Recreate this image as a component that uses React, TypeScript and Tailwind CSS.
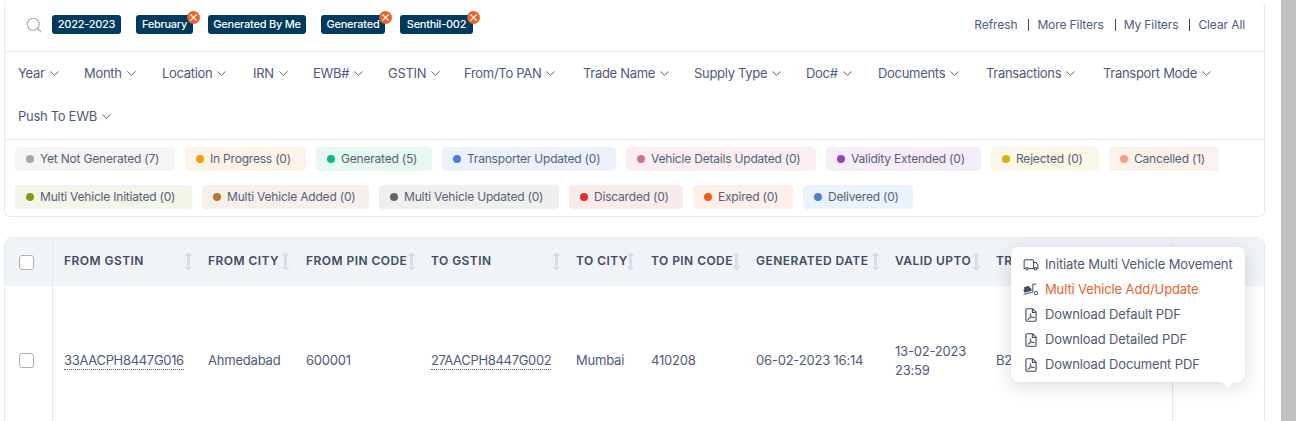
import React from "react";
import { ChevronDown, Search, X } from "lucide-react";

const pills = [
  { t: "2022-2023", w: 69, gap: 15 },
  { t: "February", w: 57, gap: 15, x: true },
  { t: "Generated By Me", w: 98, gap: 15 },
  { t: "Generated", w: 64, gap: 15, x: true },
  { t: "Senthil-002", w: 73, gap: 0, x: true },
];

const links = ["Refresh", "More Filters", "My Filters", "Clear All"];

const filters1 = [
  { t: "Year", w: 66 },
  { t: "Month", w: 78 },
  { t: "Location", w: 91 },
  { t: "IRN", w: 60 },
  { t: "EWB#", w: 75 },
  { t: "GSTIN", w: 76 },
  { t: "From/To PAN", w: 119 },
  { t: "Trade Name", w: 111 },
  { t: "Supply Type", w: 112 },
  { t: "Doc#", w: 72 },
  { t: "Documents", w: 108 },
  { t: "Transactions", w: 117 },
  { t: "Transport Mode", w: 120 },
];

const row1 = [
  { t: "Yet Not Generated (7)", w: 160, bg: "bg-[#f5f5f5]", dot: "bg-[#a8a8a8]" },
  { t: "In Progress (0)", w: 121, bg: "bg-[#fdf4e7]", dot: "bg-[#f39c12]" },
  { t: "Generated (5)", w: 116, bg: "bg-[#e7f7f2]", dot: "bg-[#10b98a]" },
  { t: "Transporter Updated (0)", w: 174, bg: "bg-[#ecf2fc]", dot: "bg-[#4a7fdc]" },
  { t: "Vehicle Details Updated (0)", w: 190, bg: "bg-[#faeef2]", dot: "bg-[#d0708f]" },
  { t: "Validity Extended (0)", w: 155, bg: "bg-[#f6edf8]", dot: "bg-[#a040b8]" },
  { t: "Rejected (0)", w: 108, bg: "bg-[#faf7e6]", dot: "bg-[#d4b016]" },
  { t: "Cancelled (1)", w: 110, bg: "bg-[#fdf1ec]", dot: "bg-[#f2a183]" },
];
const row2 = [
  { t: "Multi Vehicle Initiated (0)", w: 177, bg: "bg-[#f3f5e8]", dot: "bg-[#869a18]" },
  { t: "Multi Vehicle Added (0)", w: 167, bg: "bg-[#f7f0ea]", dot: "bg-[#b07830]" },
  { t: "Multi Vehicle Updated (0)", w: 180, bg: "bg-[#efefef]", dot: "bg-[#636363]" },
  { t: "Discarded (0)", w: 114, bg: "bg-[#fbeaea]", dot: "bg-[#d83030]" },
  { t: "Expired (0)", w: 100, bg: "bg-[#feefe9]", dot: "bg-[#f05a22]" },
  { t: "Delivered (0)", w: 110, bg: "bg-[#ecf2fc]", dot: "bg-[#4a7fdc]" },
];

const cols = [
  { h: "FROM GSTIN", w: 144, sort: 120, v: "33AACPH8447G016", dotted: true },
  { h: "FROM CITY", w: 98, sort: 73, v: "Ahmedabad" },
  { h: "FROM PIN CODE", w: 125, sort: 101, v: "600001" },
  { h: "TO GSTIN", w: 145, sort: 121, v: "27AACPH8447G002", dotted: true },
  { h: "TO CITY", w: 75, sort: 50, v: "Mumbai" },
  { h: "TO PIN CODE", w: 105, sort: 81, v: "410208" },
  { h: "GENERATED DATE", w: 139, sort: 115, v: "06-02-2023 16:14" },
  { h: "VALID UPTO", w: 101, sort: 77, v: "13-02-2023\n23:59" },
  { h: "TR", w: 176, sort: 0, v: "B2" },
];

function SortIcon() {
  return (
    <svg width="9" height="19" viewBox="0 0 9 19" fill="none" stroke="#cdd2d9" strokeWidth="1" className="shrink-0">
      <path d="M1 4.5 4.5 1 8 4.5M1 14.5 4.5 18 8 14.5M3.8 2v15M5.2 2v15" />
    </svg>
  );
}

function Pill({ t, w, gap, x }: { t: string; w: number; gap: number; x?: boolean }) {
  return (
    <div
      className="relative flex h-[19px] items-center justify-center rounded-[3px] bg-[#003a5d] text-[11px] font-medium tracking-[-0.25px] text-white"
      style={{ width: w, marginRight: gap }}
    >
      {t}
      {x && (
        <span className="absolute -right-[7px] -top-[4px] flex h-[13px] w-[13px] items-center justify-center rounded-full bg-[#e8622c]">
          <X size={11} color="#fff" strokeWidth={2.4} />
        </span>
      )}
    </div>
  );
}

function Chip({ t, w, bg, dot }: { t: string; w: number; bg: string; dot: string }) {
  return (
    <div className={`flex h-6 items-center gap-[6px] rounded-[4px] pl-[11px] text-[12px] tracking-[-0.2px] text-[#55607a] ${bg}`} style={{ width: w }}>
      <span className={`h-2 w-2 rounded-full ${dot}`} />
      <span className="whitespace-nowrap">{t}</span>
    </div>
  );
}

function FilterItem({ t, w }: { t: string; w?: number }) {
  return (
    <div className="flex items-center gap-[2px] whitespace-nowrap text-[13px] tracking-[-0.3px] text-[#4d5a78]" style={w ? { width: w } : undefined}>
      {t}
      <ChevronDown size={15} strokeWidth={1.5} color="#4d5768" />
    </div>
  );
}

function TruckIcon() {
  return (
    <svg width="16" height="12" viewBox="0 0 18 14" fill="none" stroke="#3f4a5e" strokeWidth="1.2">
      <path d="M2.5 11H1V2.2A1.2 1.2 0 0 1 2.2 1h8.6A1.2 1.2 0 0 1 12 2.2V11H6.2M12 4h3l2 3v4h-1M12 11h.5" />
      <circle cx="4.3" cy="11.3" r="1.5" />
      <circle cx="14.3" cy="11.3" r="1.5" />
    </svg>
  );
}

function LiftIcon() {
  return (
    <svg width="16" height="13" viewBox="0 0 18 14" fill="none" stroke="#3f4a5e" strokeWidth="1.1">
      <path d="M1 7.5 8.5 5.5 9.3 8 1.8 10Z" fill="#3f4a5e" />
      <path d="M1.5 4.8 6.5 3.5 7.2 5.2 2.2 6.5Z" fill="#3f4a5e" />
      <path d="M.8 12.5 11 10V1h4" />
      <circle cx="14.5" cy="11" r="2" />
    </svg>
  );
}

function PdfIcon() {
  return (
    <svg width="12" height="14" viewBox="0 0 13 15" fill="none" stroke="#3f4a5e" strokeWidth="1.2">
      <path d="M2.2 .8H8.3L12 4.5V12.8A1.4 1.4 0 0 1 10.6 14.2H2.4A1.4 1.4 0 0 1 1 12.8V2A1.2 1.2 0 0 1 2.2 .8ZM8 1V4.8H12" />
      <path d="M3 12.2C5 11.5 6.5 8.5 6.2 6.5 6 5.5 5.3 6 5.6 7.2 6 9 8 10.6 10 10.6 10.8 10.5 10.2 9.8 9 9.9 7 10.1 4.5 11 3 12.2Z" strokeWidth=".9" />
    </svg>
  );
}

function Menu() {
  const items = [
    { t: "Initiate Multi Vehicle Movement", icon: <TruckIcon /> },
    { t: "Multi Vehicle Add/Update", icon: <LiftIcon />, active: true },
    { t: "Download Default PDF", icon: <PdfIcon /> },
    { t: "Download Detailed PDF", icon: <PdfIcon /> },
    { t: "Download Document PDF", icon: <PdfIcon /> },
  ];
  return (
    <div className="absolute left-[1006px] top-[9px] flex h-[135px] w-[234px] flex-col justify-center rounded-[8px] bg-white pl-[12px] shadow-[0_4px_18px_rgba(40,50,70,0.18)]">
      {items.map((i) => (
        <div key={i.t} className={`flex h-[25px] items-center whitespace-nowrap text-[13px] tracking-[-0.13px] ${i.active ? "text-[#e8622c]" : "text-[#4f5a70]"}`}>
          <span className="mr-[6px] flex w-[16px] justify-center">{i.icon}</span>
          <span>{i.t}</span>
        </div>
      ))}
      <span className="absolute left-[213px] top-[131px] h-[8px] w-[8px] rotate-45 bg-white" />
    </div>
  );
}

function CheckCell() {
  return (
    <div className="flex w-[48px] items-center border-r border-[#e4e8ee] pl-[14px]">
      <span className="h-[15px] w-[15px] rounded-[3px] border border-[#aab0ba] bg-white" />
    </div>
  );
}

export default function App() {
  return (
    <div className="flex h-[421px] w-full overflow-hidden bg-white font-['Inter','Liberation_Sans',sans-serif]">
      <div className="w-[1280px] shrink-0 pl-[4px] pr-[16px]">
        <div className="w-[1261px] rounded-[6px] border border-t-0 border-[#e7eaee]">
          <div className="flex h-[52px] items-center justify-between border-b border-[#e7eaee] pb-[2px] pl-[20px] pr-[19px]">
            <div className="flex items-center">
              <Search size={18} color="#a6afc0" strokeWidth={1.6} className="mr-[9px]" />
              {pills.map((p) => (
                <Pill key={p.t} {...p} />
              ))}
            </div>
            <div className="flex items-center text-[12px] tracking-[-0.1px] text-[#4d5a78]">
              {links.map((l, i) => (
                <React.Fragment key={l}>
                  {i > 0 && <span className="ml-[11px] mr-[8px] h-[12px] w-px bg-[#3c4658]" />}
                  <span>{l}</span>
                </React.Fragment>
              ))}
            </div>
          </div>
          <div className="border-b border-[#e7eaee] pb-px pl-[13px]">
            <div className="flex h-[43px] items-center">
              {filters1.map((f) => (
                <FilterItem key={f.t} {...f} />
              ))}
            </div>
            <div className="flex h-[43px] items-center">
              <FilterItem t="Push To EWB" />
            </div>
          </div>
          <div className="flex flex-col gap-[14px] pb-[7px] pl-[10px] pt-[7px]">
            <div className="flex gap-[10px]">
              {row1.map((c) => (
                <Chip key={c.t} {...c} />
              ))}
            </div>
            <div className="flex gap-[10px]">
              {row2.map((c) => (
                <Chip key={c.t} {...c} />
              ))}
            </div>
          </div>
        </div>

        <div className="relative mt-[20px] h-[200px] w-[1261px] rounded-[8px] border border-[#e7eaee]">
          <div className="flex h-[48px] rounded-t-[8px] bg-[#f0f3f7]">
            <CheckCell />
            <div className="flex pb-[2px] pl-[11px]">
              {cols.map((c) => (
                <div key={c.h} className="relative flex shrink-0 items-center text-[12px] font-semibold tracking-[0.45px] text-[#414c60]" style={{ width: c.w }}>
                  <span className="whitespace-nowrap">{c.h}</span>
                  {c.sort > 0 && (
                    <span className="absolute top-[14px]" style={{ left: c.sort }}>
                      <SortIcon />
                    </span>
                  )}
                </div>
              ))}
            </div>
            <div className="ml-auto w-[92px] border-l border-[#e4e8ee]" />
          </div>
          <div className="flex h-[149px]">
            <CheckCell />
            <div className="flex pl-[11px]">
              {cols.map((c) => (
                <div key={c.h} className="flex shrink-0 items-center text-[13px] leading-[19px] tracking-[-0.2px] text-[#4d5a78]" style={{ width: c.w }}>
                  <span className={c.dotted ? "border-b border-dotted border-[#4d5a78] leading-[17px] tracking-[-0.32px]" : "whitespace-pre-line"}>{c.v}</span>
                </div>
              ))}
            </div>
            <div className="ml-auto w-[92px] border-l border-[#e4e8ee]" />
          </div>
          <Menu />
        </div>
      </div>
      <div className="ml-px w-[15px] shrink-0 bg-[#c1c1c1]" />
    </div>
  );
}
